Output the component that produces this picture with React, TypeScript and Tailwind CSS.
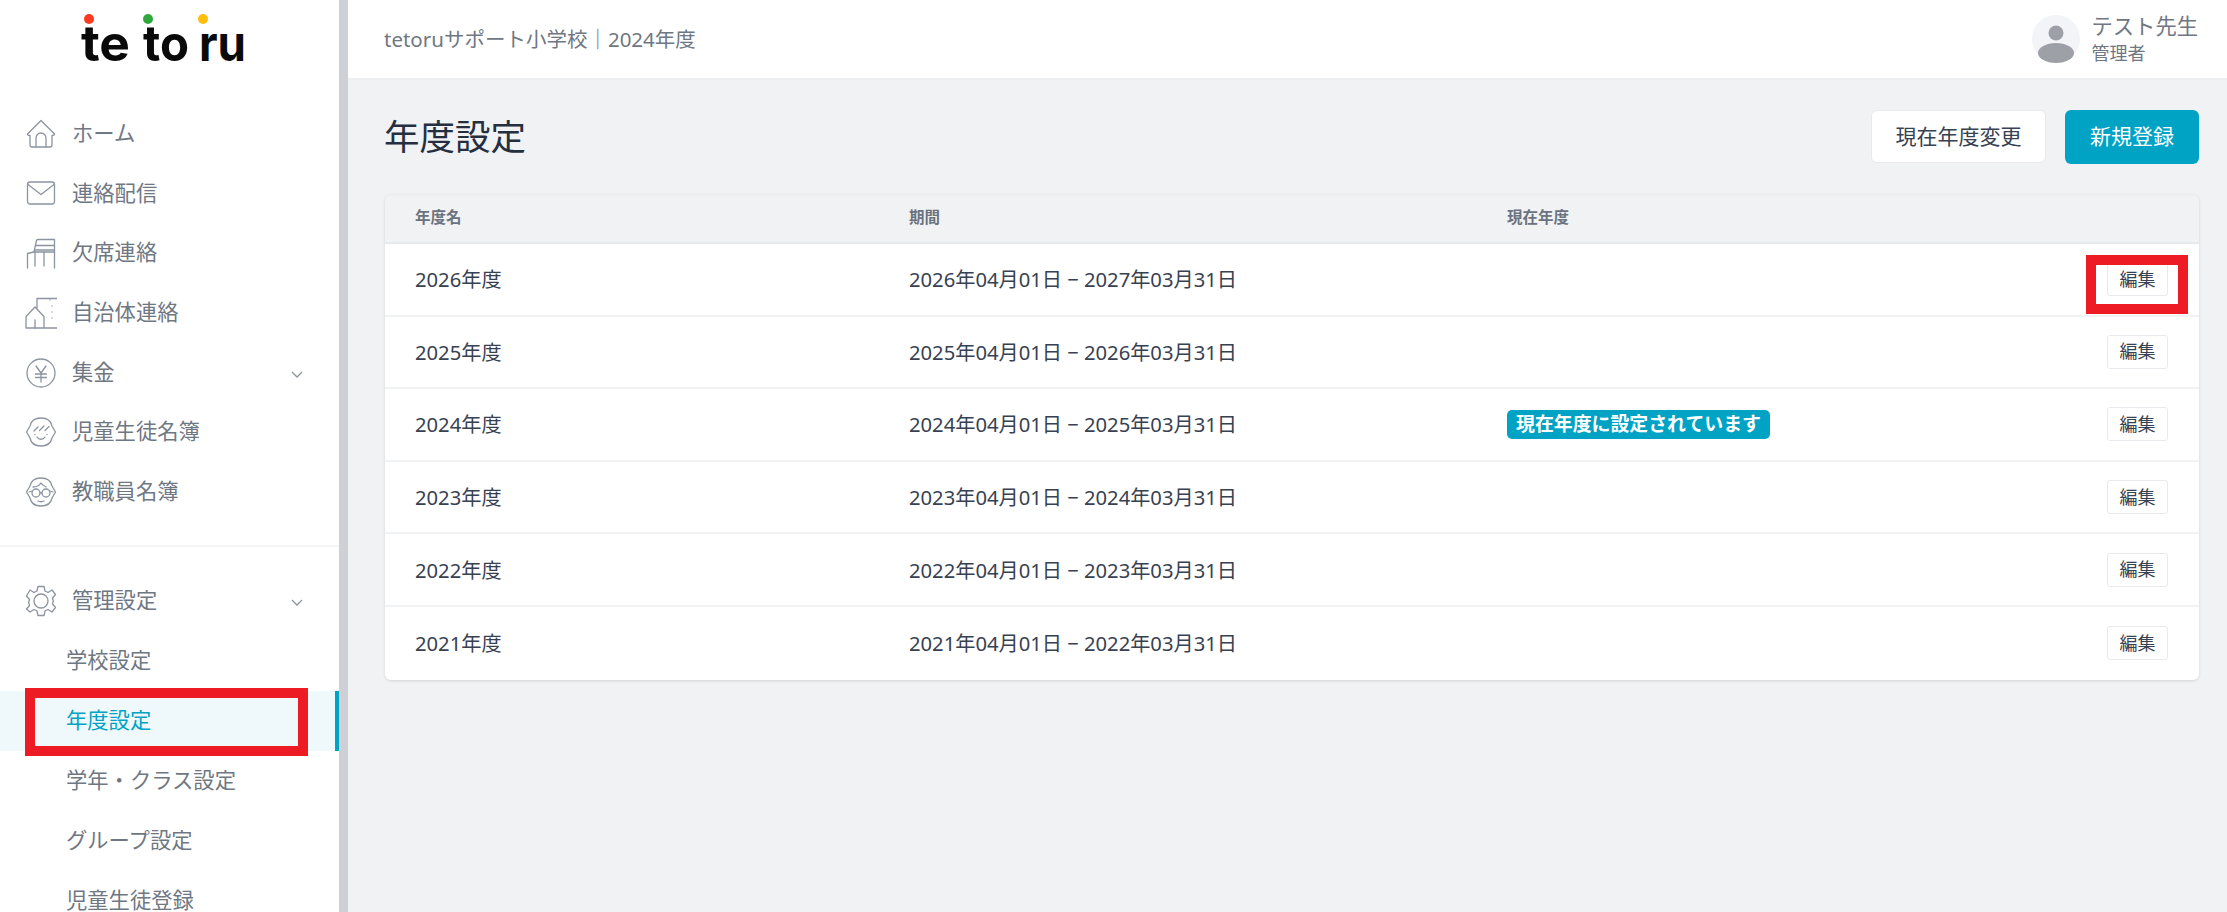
import React from "react";

const S = { fill: "none", stroke: "#8c94a0", strokeWidth: 1.3, strokeLinecap: "round" as const, strokeLinejoin: "round" as const };

function Icon({ children }: { children: React.ReactNode }) {
  return (
    <svg width="32" height="32" viewBox="0 0 32 32" className="shrink-0" {...S}>
      {children}
    </svg>
  );
}

const Home = () => (
  <Icon>
    <path d="M2.500 16 16 2.500 29.500 16" />
    <path d="M2.500 16c0 1 1 1.500 2.500 1.300V27c0 1.200.8 2 2 2h18c1.200 0 2-.8 2-2v-9.700c1.500.2 2.500-.3 2.500-1.300" />
    <path d="M11 29v-9a5 5 0 0 1 10 0v9" />
  </Icon>
);
const Mail = () => (
  <Icon>
    <rect x="2.500" y="4" width="27" height="22" rx="2.500" />
    <path d="m3 6.500 13 10 13-10" />
  </Icon>
);
const Chair = () => (
  <Icon>
    <path d="M2.500 31V16.500L9 15h20.500" />
    <path d="M9 15 11.500 3.500c.2-.8.8-1 1.500-1h16.500V31" />
    <path d="M11 8.500h18M10 13h19M10 15v14M19 15v14" />
  </Icon>
);
const Building = () => (
  <Icon>
    <path d="M12 11V1.500h21V31H1V19.500L10 10l9 9.500V31" />
    <path d="M10 31v-8" />
    <path d="M25 3v.1M27 9v.1M27 15v.1M27 21v.1" />
  </Icon>
);
const Yen = () => (
  <Icon>
    <circle cx="16" cy="16" r="14" />
    <path d="m11 9 5 7 5-7M10.500 17h11M10.500 20.500h11M16 16v9" />
  </Icon>
);
const Face1 = () => (
  <Icon>
    <path d="M16 2c6 0 10 3 11 8l3.500 6-3.500 6c-1 5-5 8-11 8S6 27 5 22l-3.500-6L5 10c1-5 5-8 11-8Z" />
    <path d="m9 15 4-4M14.500 14.500l4.500-4.500M20 14.500l4-4" />
    <path d="M12 21c2 3 6 3 8 0M10 18.500v.1M22 18.500v.1" />
  </Icon>
);
const Face2 = () => (
  <Icon>
    <path d="M16 2c6 0 10 3 11 8l3.500 6-3.500 6c-1 5-5 8-11 8S6 27 5 22l-3.500-6L5 10c1-5 5-8 11-8Z" />
    <circle cx="11" cy="17" r="4" />
    <circle cx="21" cy="17" r="4" />
    <path d="M15 17h2M7 15l-3 1M25 15l3 1M8 11c4 0 6-1 8-4 1 2 3 3 5 4M13 25c2 1 4 1 6 0" />
  </Icon>
);
const Gear = () => (
  <Icon>
    <path d="M13 1.500h6l1 4.500 3 1.500 4-2.500 3.500 4.500-3 3.500.8 3-.8 3 3 3.500-3.500 4.500-4-2.500-3 1.500-1 4.500h-6l-1-4.500-3-1.500-4 2.500L1.500 24l3-3.500-.8-3 .8-3-3-3.500L5 5l4 2.500 3-1.500Z" />
    <circle cx="16" cy="16" r="7" />
  </Icon>
);

const Chevron = () => (
  <svg width="14" height="10" viewBox="0 0 14 10" fill="none" stroke="#8c94a0" strokeWidth="1.300" className="ml-auto mr-[35px] mt-[4px]">
    <path d="m2 2 5 5 5-5" />
  </svg>
);

function NavItem({ icon, label, chevron }: { icon: React.ReactNode; label: string; chevron?: boolean }) {
  return (
    <div className="flex h-[59.700px] shrink-0 items-center gap-[15px] pl-[25px] text-[21.300px] text-[#6f7783]">
      <span className="flex w-[32px] justify-center">{icon}</span>
      <span className="pb-[2px]">{label}</span>
      {chevron && <Chevron />}
    </div>
  );
}

function SubItem({ label, active }: { label: string; active?: boolean }) {
  return (
    <div
      className={
        active
          ? "flex h-[60px] shrink-0 items-center border-r-[4px] border-[#00a3c4] bg-[#eff9fb] pb-[2px] pl-[66px] text-[21.300px] text-[#00a3c4]"
          : "flex h-[60px] shrink-0 items-center pb-[2px] pl-[66px] text-[21.300px] text-[#6f7783]"
      }
    >
      {label}
    </div>
  );
}

const years: [string, string, boolean][] = [
  ["2026年度", "2026年04月01日 − 2027年03月31日", false],
  ["2025年度", "2025年04月01日 − 2026年03月31日", false],
  ["2024年度", "2024年04月01日 − 2025年03月31日", true],
  ["2023年度", "2023年04月01日 − 2024年03月31日", false],
  ["2022年度", "2022年04月01日 − 2023年03月31日", false],
  ["2021年度", "2021年04月01日 − 2022年03月31日", false],
];

export default function App() {
  return (
    <div className="flex h-screen w-full overflow-hidden bg-[#f1f2f4] [font-family:'Noto_Sans','Noto_Sans_CJK_JP',sans-serif]">
      <aside className="flex w-[339px] shrink-0 flex-col bg-white">
        <div className="flex h-[104px] shrink-0 pl-[79px]">
          <svg width="170" height="66" viewBox="0 0 170 66" className="mt-[9px]">
            <circle cx="10" cy="10" r="5" fill="#fb3a1f" />
            <circle cx="69" cy="10" r="5" fill="#2ea83d" />
            <circle cx="124" cy="10" r="5" fill="#ffbe0b" />
            <text x="2" y="52" fontSize="50" fontWeight="700" fill="#0a0a0a" textLength="49" lengthAdjust="spacingAndGlyphs" fontFamily="Inter, sans-serif">te</text>
            <text x="64" y="52" fontSize="50" fontWeight="700" fill="#0a0a0a" textLength="46" lengthAdjust="spacingAndGlyphs" fontFamily="Inter, sans-serif">to</text>
            <text x="120" y="52" fontSize="50" fontWeight="700" fill="#0a0a0a" textLength="47" lengthAdjust="spacingAndGlyphs" fontFamily="Inter, sans-serif">ru</text>
          </svg>
        </div>
        <NavItem icon={<Home />} label="ホーム" />
        <NavItem icon={<Mail />} label="連絡配信" />
        <NavItem icon={<Chair />} label="欠席連絡" />
        <NavItem icon={<Building />} label="自治体連絡" />
        <NavItem icon={<Yen />} label="集金" chevron />
        <NavItem icon={<Face1 />} label="児童生徒名簿" />
        <NavItem icon={<Face2 />} label="教職員名簿" />
        <div className="mt-[23px] mb-[24px] h-[2px] shrink-0 bg-[#f3f4f6]" />
        <NavItem icon={<Gear />} label="管理設定" chevron />
        <SubItem label="学校設定" />
        <SubItem label="年度設定" active />
        <SubItem label="学年・クラス設定" />
        <SubItem label="グループ設定" />
        <SubItem label="児童生徒登録" />
      </aside>
      <div className="w-[9px] shrink-0 bg-[#cfd0d5]" />
      <main className="flex min-w-0 flex-1 flex-col">
        <header className="flex h-[80px] shrink-0 items-center border-b-2 border-[#eceef0] bg-white pl-[36px] pr-[29px]">
          <span className="text-[20.500px] text-[#6f7783]">tetoruサポート小学校｜2024年度</span>
          <div className="ml-auto flex items-center gap-[12px]">
            <svg width="48" height="48" viewBox="0 0 48 48">
              <circle cx="24" cy="24" r="24" fill="#f3f4f8" />
              <circle cx="24" cy="18" r="7.500" fill="#9ea0a8" />
              <ellipse cx="24" cy="38" rx="18" ry="10" fill="#9ea0a8" />
            </svg>
            <div className="flex flex-col">
              <span className="text-[21.300px] leading-[28px] text-[#6f7783]">テスト先生</span>
              <span className="text-[18px] leading-[26px] text-[#6f7783]">管理者</span>
            </div>
          </div>
        </header>
        <div className="flex flex-col pl-[37px] pr-[28px]">
          <div className="flex h-[114px] items-center">
            <h1 className="-ml-px text-[35.500px] font-normal text-[#252f3f]">年度設定</h1>
            <div className="ml-auto flex gap-[19px]">
              <button className="h-[53px] w-[175px] rounded-[6px] border border-[#e8e9ec] bg-white text-[21px] text-[#374151]">現在年度変更</button>
              <button className="h-[54px] w-[134px] rounded-[6px] bg-[#00a3c4] text-[21px] text-white">新規登録</button>
            </div>
          </div>
          <div className="rounded-[6px] border-t-2 border-[#eceef0] shadow-[0_1px_3px_rgba(0,0,0,0.12)]">
            <div className="flex h-[48px] items-center border-b-2 border-[#e8e9ec] pb-[2px] pl-[30px] text-[15.500px] font-bold text-[#6b7280]">
              <span className="w-[494px]">年度名</span>
              <span className="w-[598px]">期間</span>
              <span>現在年度</span>
            </div>
            {years.map(([name, period, current], i) => (
              <div
                key={name}
                className={
                  i === years.length - 1
                    ? "flex h-[72.600px] items-center rounded-b-[6px] bg-white pl-[30px] text-[20.200px] text-[#374151]"
                    : "flex h-[72.600px] items-center border-b-2 border-[#f1f2f4] bg-white pl-[30px] text-[20.200px] text-[#374151]"
                }
              >
                <span className="w-[494px]">{name}</span>
                <span className="w-[598px]">{period}</span>
                {current && (
                  <span className="flex h-[29px] w-[263px] items-center justify-center rounded-[5px] bg-[#00a3c4] text-[18.900px] font-bold text-white">現在年度に設定されています</span>
                )}
                <button className="ml-auto mr-[31px] h-[34px] w-[61px] rounded-[3px] border border-[#e8e9ec] bg-white text-[18px] text-[#374151]">編集</button>
              </div>
            ))}
          </div>
        </div>
      </main>
      <div className="pointer-events-none absolute left-[25px] top-[688px] h-[68px] w-[283px] border-[10px] border-[#ed1c24]" />
      <div className="pointer-events-none absolute left-[2086px] top-[255px] h-[59px] w-[102px] border-[10px] border-[#ed1c24]" />
    </div>
  );
}
